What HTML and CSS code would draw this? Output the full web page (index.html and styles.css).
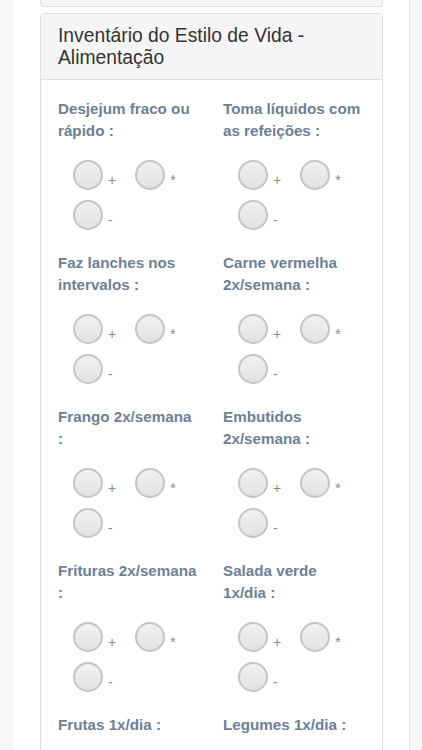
FILE: index.html
```html
<!DOCTYPE html>
<html lang="pt">
<head>
<meta charset="utf-8">
<title>Inventário do Estilo de Vida - Alimentação</title>
<link rel="stylesheet" href="styles.css">
</head>
<body>
<div class="page">
  <div class="prev-panel"></div>
  <div class="panel">
    <div class="panel-heading">Inventário do Estilo de Vida - Alimentação</div>
    <div class="panel-body">
      <div class="question">
        <div class="q-label">Desjejum fraco ou rápido :</div>
        <div class="options">
          <span class="opt"><span class="radio"></span><span class="opt-text">+</span></span>
          <span class="opt"><span class="radio"></span><span class="opt-text">*</span></span>
          <span class="opt"><span class="radio"></span><span class="opt-text">-</span></span>
        </div>
      </div>
      <div class="question">
        <div class="q-label">Toma líquidos com as refeições :</div>
        <div class="options">
          <span class="opt"><span class="radio"></span><span class="opt-text">+</span></span>
          <span class="opt"><span class="radio"></span><span class="opt-text">*</span></span>
          <span class="opt"><span class="radio"></span><span class="opt-text">-</span></span>
        </div>
      </div>
      <div class="question">
        <div class="q-label">Faz lanches nos intervalos :</div>
        <div class="options">
          <span class="opt"><span class="radio"></span><span class="opt-text">+</span></span>
          <span class="opt"><span class="radio"></span><span class="opt-text">*</span></span>
          <span class="opt"><span class="radio"></span><span class="opt-text">-</span></span>
        </div>
      </div>
      <div class="question">
        <div class="q-label">Carne vermelha 2x/semana :</div>
        <div class="options">
          <span class="opt"><span class="radio"></span><span class="opt-text">+</span></span>
          <span class="opt"><span class="radio"></span><span class="opt-text">*</span></span>
          <span class="opt"><span class="radio"></span><span class="opt-text">-</span></span>
        </div>
      </div>
      <div class="question">
        <div class="q-label">Frango 2x/semana :</div>
        <div class="options">
          <span class="opt"><span class="radio"></span><span class="opt-text">+</span></span>
          <span class="opt"><span class="radio"></span><span class="opt-text">*</span></span>
          <span class="opt"><span class="radio"></span><span class="opt-text">-</span></span>
        </div>
      </div>
      <div class="question">
        <div class="q-label">Embutidos 2x/semana :</div>
        <div class="options">
          <span class="opt"><span class="radio"></span><span class="opt-text">+</span></span>
          <span class="opt"><span class="radio"></span><span class="opt-text">*</span></span>
          <span class="opt"><span class="radio"></span><span class="opt-text">-</span></span>
        </div>
      </div>
      <div class="question">
        <div class="q-label">Frituras 2x/semana :</div>
        <div class="options">
          <span class="opt"><span class="radio"></span><span class="opt-text">+</span></span>
          <span class="opt"><span class="radio"></span><span class="opt-text">*</span></span>
          <span class="opt"><span class="radio"></span><span class="opt-text">-</span></span>
        </div>
      </div>
      <div class="question">
        <div class="q-label">Salada verde 1x/dia :</div>
        <div class="options">
          <span class="opt"><span class="radio"></span><span class="opt-text">+</span></span>
          <span class="opt"><span class="radio"></span><span class="opt-text">*</span></span>
          <span class="opt"><span class="radio"></span><span class="opt-text">-</span></span>
        </div>
      </div>
      <div class="question">
        <div class="q-label">Frutas 1x/dia :</div>
        <div class="options">
          <span class="opt"><span class="radio"></span><span class="opt-text">+</span></span>
          <span class="opt"><span class="radio"></span><span class="opt-text">*</span></span>
          <span class="opt"><span class="radio"></span><span class="opt-text">-</span></span>
        </div>
      </div>
      <div class="question">
        <div class="q-label">Legumes 1x/dia :</div>
        <div class="options">
          <span class="opt"><span class="radio"></span><span class="opt-text">+</span></span>
          <span class="opt"><span class="radio"></span><span class="opt-text">*</span></span>
          <span class="opt"><span class="radio"></span><span class="opt-text">-</span></span>
        </div>
      </div>
    </div>
  </div>
</div>
</body>
</html>
```
FILE: styles.css
```css
html, body {
  margin: 0;
  padding: 0;
}
body {
  background: #f7f7f7;
  font-family: "Liberation Sans", Arial, Helvetica, sans-serif;
  color: #333;
  height: 750px;
  overflow: hidden;
}
.page {
  margin: 0 12px 0 13px;
  background: #fff;
  border-right: 1px solid #e6e6e6;
  padding: 0 26px 0 27px;
  min-height: 750px;
  box-sizing: border-box;
}
.prev-panel {
  height: 6px;
  background: #f5f5f5;
  border: 1px solid #dedede;
  border-top: none;
  border-radius: 0 0 4px 4px;
}
.panel {
  margin-top: 6px;
  border: 1px solid #dedede;
  border-radius: 4px;
  background: #fff;
}
.panel-heading {
  background: #f5f5f5;
  border-bottom: 1px solid #dedede;
  border-radius: 3px 3px 0 0;
  padding: 11px 17px 10px;
  font-size: 19.3px;
  line-height: 22px;
  color: #333;
}
.panel-body {
  padding: 18px 0 0 17px;
  display: grid;
  grid-template-columns: 165px 165px;
  row-gap: 22px;
}
.q-label {
  max-width: 140px;
  font-size: 15.2px;
  line-height: 22px;
  font-weight: bold;
  color: #6d8096;
}
.options {
  margin-top: 18px;
  padding-left: 15px;
  width: 150px;
  display: flex;
  flex-wrap: wrap;
  row-gap: 10px;
}
.opt {
  display: inline-flex;
  align-items: flex-end;
  margin-right: 19px;
}
.radio {
  width: 30px;
  height: 30px;
  box-sizing: border-box;
  border-radius: 50%;
  border: 2px solid #c4c4c4;
  background: linear-gradient(#f1f1f1, #e2e2e2);
}
.opt-text {
  margin-left: 5px;
  font-size: 14px;
  line-height: 16px;
  padding-bottom: 2px;
  color: #8a8a8a;
}
```
